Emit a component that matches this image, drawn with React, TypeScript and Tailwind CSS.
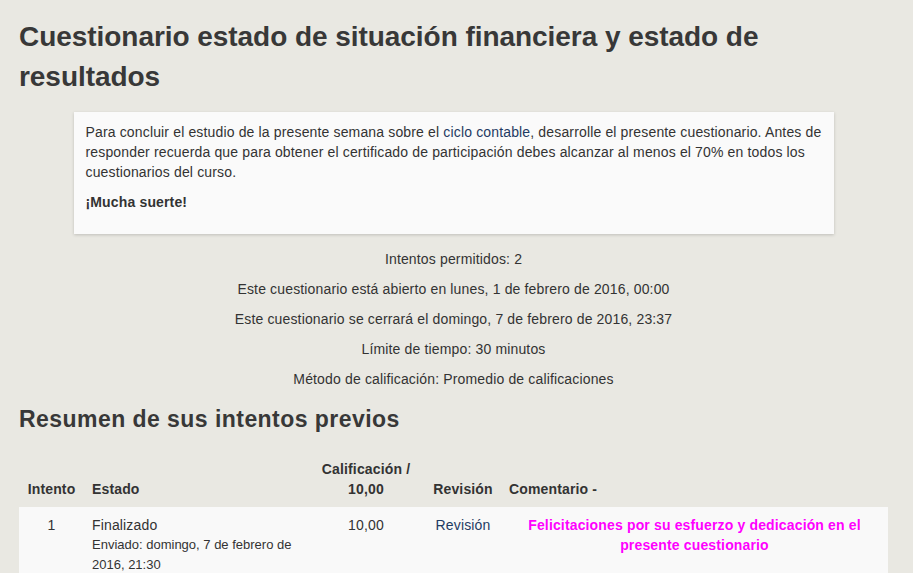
export default function App() {
  const info = [
    "Intentos permitidos: 2",
    "Este cuestionario está abierto en lunes, 1 de febrero de 2016, 00:00",
    "Este cuestionario se cerrará el domingo, 7 de febrero de 2016, 23:37",
    "Límite de tiempo: 30 minutos",
    "Método de calificación: Promedio de calificaciones",
  ];

  return (
    <div
      className="min-h-screen bg-[#e9e8e2] text-[#333] text-[14px] leading-[20px] tracking-[0.15px]"
      style={{ fontFamily: '"Liberation Sans", Arial, sans-serif' }}
    >
      <div className="w-[869px] ml-[19px] pt-[17px]">
        <h2 className="text-[28px] leading-[40px] font-bold text-[#383838] tracking-[-0.05px]">
          Cuestionario estado de situación financiera y estado de resultados
        </h2>

        {/* intro box */}
        <div className="w-[760px] mx-auto mt-[15px] bg-[#fafafa] pl-[12px] pr-[8px] pt-[10px] pb-[12px] shadow-[0_1px_3px_rgba(0,0,0,0.18)]">
          <p className="mb-[10px]">
            Para concluir el estudio de la presente semana sobre el{" "}
            <a className="text-[#1f3b63]">ciclo contable</a>, desarrolle el presente cuestionario. Antes de
            responder recuerda que para obtener el certificado de participación debes alcanzar al menos el
            70% en todos los cuestionarios del curso.
          </p>
          <p className="mb-[10px] font-bold">¡Mucha suerte!</p>
        </div>

        {/* quiz info */}
        <div className="mt-[15px] text-center">
          {info.map((t) => (
            <p key={t} className="mb-[10px]">
              {t}
            </p>
          ))}
        </div>

        <h3 className="text-[23px] leading-[40px] font-bold text-[#383838] tracking-[0.45px] mt-[1px]">
          Resumen de sus intentos previos
        </h3>

        <table className="mt-[12px] w-[869px] table-fixed border-collapse">
          <colgroup>
            <col className="w-[65px]" />
            <col className="w-[223px]" />
            <col className="w-[118px]" />
            <col className="w-[76px]" />
            <col className="w-[387px]" />
          </colgroup>
          <thead>
            <tr className="font-bold align-bottom">
              <th className="p-[8px] text-center">Intento</th>
              <th className="p-[8px] text-left">Estado</th>
              <th className="p-[8px] text-center">Calificación / 10,00</th>
              <th className="p-[8px] text-center">Revisión</th>
              <th className="p-[8px] text-left">Comentario -</th>
            </tr>
          </thead>
          <tbody>
            <tr className="bg-[#f9f9f9] align-top">
              <td className="p-[8px] text-center">1</td>
              <td className="p-[8px] text-left">
                Finalizado
                <span className="block text-[13px] tracking-normal">
                  Enviado: domingo, 7 de febrero de 2016, 21:30
                </span>
              </td>
              <td className="p-[8px] text-center">10,00</td>
              <td className="p-[8px] text-center">
                <a className="text-[#1f3b63]">Revisión</a>
              </td>
              <td className="p-[8px] pb-[30px] text-center font-bold text-[#ff00ff]">
                Felicitaciones por su esfuerzo y dedicación en el presente cuestionario
              </td>
            </tr>
          </tbody>
        </table>
      </div>
    </div>
  );
}
